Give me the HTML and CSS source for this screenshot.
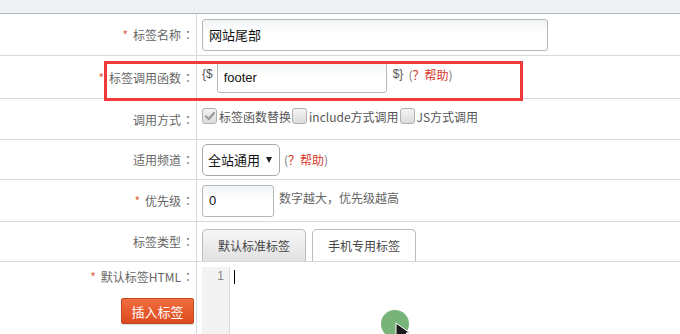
FILE: index.html
```html
<!DOCTYPE html>
<html lang="zh-CN">
<head>
<meta charset="utf-8">
<title>标签编辑</title>
<link rel="stylesheet" href="styles.css">
</head>
<body>
<div class="page">
  <div class="topbar"></div>
  <div class="form">
    <div class="row r1">
      <div class="label"><span class="req">*</span>标签名称<span class="colon">：</span></div>
      <div class="field"><input class="txt name" type="text" value="网站尾部"></div>
    </div>
    <div class="row r2">
      <div class="label"><span class="req">*</span>标签调用函数<span class="colon">：</span></div>
      <div class="field">
        <span class="brace">{$</span>
        <input class="txt func" type="text" value="footer">
        <span class="brace after">$}</span>
        <span class="help">(<span class="helpred">？帮助</span>)</span>
      </div>
    </div>
    <div class="row r3">
      <div class="label">调用方式<span class="colon">：</span></div>
      <div class="field checks">
        <span class="cb checked"><svg viewBox="0 0 12 12" width="12" height="12"><path d="M2 6.5 L4.8 9 L10 3" fill="none" stroke="#9a9a9a" stroke-width="2.2" stroke-linecap="round" stroke-linejoin="round"/></svg></span><span class="cbt">标签函数替换</span><span class="cb"></span><span class="cbt">include方式调用</span><span class="cb"></span><span class="cbt">JS方式调用</span>
      </div>
    </div>
    <div class="row r4">
      <div class="label">适用频道<span class="colon">：</span></div>
      <div class="field">
        <div class="select"><span>全站通用</span><span class="arrow"></span></div>
        <span class="help">(<span class="helpred">？帮助</span>)</span>
      </div>
    </div>
    <div class="row r5">
      <div class="label"><span class="req">*</span>优先级<span class="colon">：</span></div>
      <div class="field">
        <input class="txt prio" type="text" value="0">
        <span class="note">数字越大，优先级越高</span>
      </div>
    </div>
    <div class="row r6">
      <div class="label">标签类型<span class="colon">：</span></div>
      <div class="field tabs">
        <div class="tab active">默认标准标签</div>
        <div class="tab">手机专用标签</div>
      </div>
    </div>
    <div class="row r7">
      <div class="label top">
        <div class="ltxt"><span class="req">*</span>默认标签HTML<span class="colon">：</span></div>
        <button class="btn" type="button">插入标签</button>
      </div>
      <div class="field editor">
        <div class="gutter"><span class="ln">1</span></div>
        <div class="code"><span class="caret"></span></div>
      </div>
    </div>
  </div>
  <div class="highlight"></div>
  <svg class="pointer" width="34" height="30" viewBox="0 0 34 30">
    <circle cx="15" cy="15" r="14" fill="#78b47a"/>
    <path d="M16 14 L16 30 L20 26 L24 33 L34 33 L26 24 L30 24 Z" fill="#1a1a1a" stroke="#ffffff" stroke-width="1"/>
  </svg>
</div>
</body>
</html>
```

FILE: styles.css
```css
* { box-sizing: border-box; }
html, body { margin: 0; padding: 0; background: #fff; }
body {
  font-family: "Noto Sans CJK SC", "Noto Sans", "Liberation Sans", sans-serif;
  font-size: 12px;
  color: #666;
  width: 680px;
  height: 334px;
  overflow: hidden;
}
.page { position: relative; width: 680px; height: 334px; overflow: hidden; }
.topbar {
  height: 14px;
  background: #eef2f5;
  border-bottom: 1px solid #b3b6b8;
}
.form { display: flex; flex-direction: column; }
.row {
  display: grid;
  grid-template-columns: 197px 1fr;
  border-bottom: 1px solid #d4dbe0;
}
.r1 { height: 42px; }
.r2 { height: 43px; }
.r3 { height: 41px; }
.r4 { height: 40px; }
.r5 { height: 42px; }
.r6 { height: 40px; }
.r7 { height: 90px; border-bottom: none; }
.label {
  border-right: 1px solid #d4dbe0;
  display: flex;
  align-items: center;
  justify-content: flex-end;
  padding-right: 1px;
  color: #666;
  white-space: nowrap;
}
.colon {
  font-family: "Noto Sans CJK TC", "Noto Sans CJK SC", sans-serif;
  display: inline-block;
  width: 14px;
  text-align: center;
}
.req { color: #e0603f; margin-right: 5px; }
.field {
  display: flex;
  align-items: center;
  padding-left: 5px;
  white-space: nowrap;
}
.txt {
  font-family: "Liberation Sans", "Noto Sans CJK SC", sans-serif;
  font-size: 13px;
  color: #111;
  height: 32px;
  border: 1px solid #b4b8bb;
  border-radius: 3px;
  background: linear-gradient(#f1f4f6, #fff 45%);
  padding: 0 6px;
  outline: none;
  margin: 0;
}
.name { width: 346px; font-family: "Noto Sans CJK SC", sans-serif; font-size: 13px; }
.func { width: 170px; }
.prio { width: 72px; }
.brace { color: #555; font-family: "Liberation Sans", sans-serif; font-size: 12px; margin-right: 4px; margin-top: -6px; }
.brace.after { margin-left: 6px; margin-right: 2px; }
.help { color: #777; margin-left: 3px; }
.r2 .help { margin-top: -6px; }
.helpred { color: #d8392b; }
.checks { color: #555; }
.cb {
  display: inline-flex;
  align-items: center;
  justify-content: center;
  width: 15px;
  height: 16px;
  border: 1px solid #b0b0b0;
  border-radius: 3px;
  background: linear-gradient(#f4f4f4, #dcdcdc);
  margin-right: 2px;
  margin-top: -6px;
}
.cbt { margin-right: 1px; margin-top: -6px; }
.select {
  display: flex;
  align-items: center;
  justify-content: space-between;
  width: 78px;
  height: 32px;
  border: 1px solid #a9a9a9;
  border-radius: 5px;
  padding: 0 7px 0 5px;
  font-size: 13px;
  color: #111;
  background: #fff;
}
.arrow {
  width: 0;
  height: 0;
  border-left: 3.5px solid transparent;
  border-right: 3.5px solid transparent;
  border-top: 6px solid #222;
}
.r4 .help { margin-left: 4px; }
.note { color: #666; margin-left: 5px; margin-top: -6px; }
.tabs { align-items: flex-end; gap: 6px; }
.tab {
  width: 104px;
  height: 32px;
  border: 1px solid #bdbdbd;
  border-bottom: none;
  border-radius: 5px 5px 0 0;
  display: flex;
  align-items: center;
  justify-content: center;
  color: #444;
  background: #fff;
}
.tab.active {
  background: linear-gradient(#f7f7f7, #e1e1e1);
}
.label.top {
  flex-direction: column;
  align-items: flex-end;
  justify-content: flex-start;
  padding-top: 7px;
}
.ltxt { line-height: 16px; }
.btn {
  margin-top: 13px;
  margin-right: 1px;
  width: 73px;
  height: 26px;
  border: 1px solid #c4481f;
  border-radius: 2px;
  background: linear-gradient(#f26d40, #dc4b1d);
  color: #fff;
  font-family: "Noto Sans CJK SC", sans-serif;
  font-size: 13px;
  padding: 0;
  box-shadow: 0 1px 1px rgba(0,0,0,0.15);
}
.editor { align-items: flex-start; padding-top: 5px; }
.gutter {
  width: 28px;
  height: 80px;
  background: #f3f3f3;
  border-right: 1px solid #dcdcdc;
  text-align: right;
  padding-right: 5px;
  padding-top: 2px;
  color: #888;
  font-family: "Liberation Sans", sans-serif;
  font-size: 12px;
}
.code { padding-left: 4px; padding-top: 3px; }
.caret { display: block; width: 1px; height: 14px; background: #000; }
.highlight {
  position: absolute;
  left: 104px;
  top: 61px;
  width: 419px;
  height: 40px;
  border: 3px solid #f23a3a;
}
.pointer {
  position: absolute;
  left: 380px;
  top: 309px;
  overflow: visible;
}
```
